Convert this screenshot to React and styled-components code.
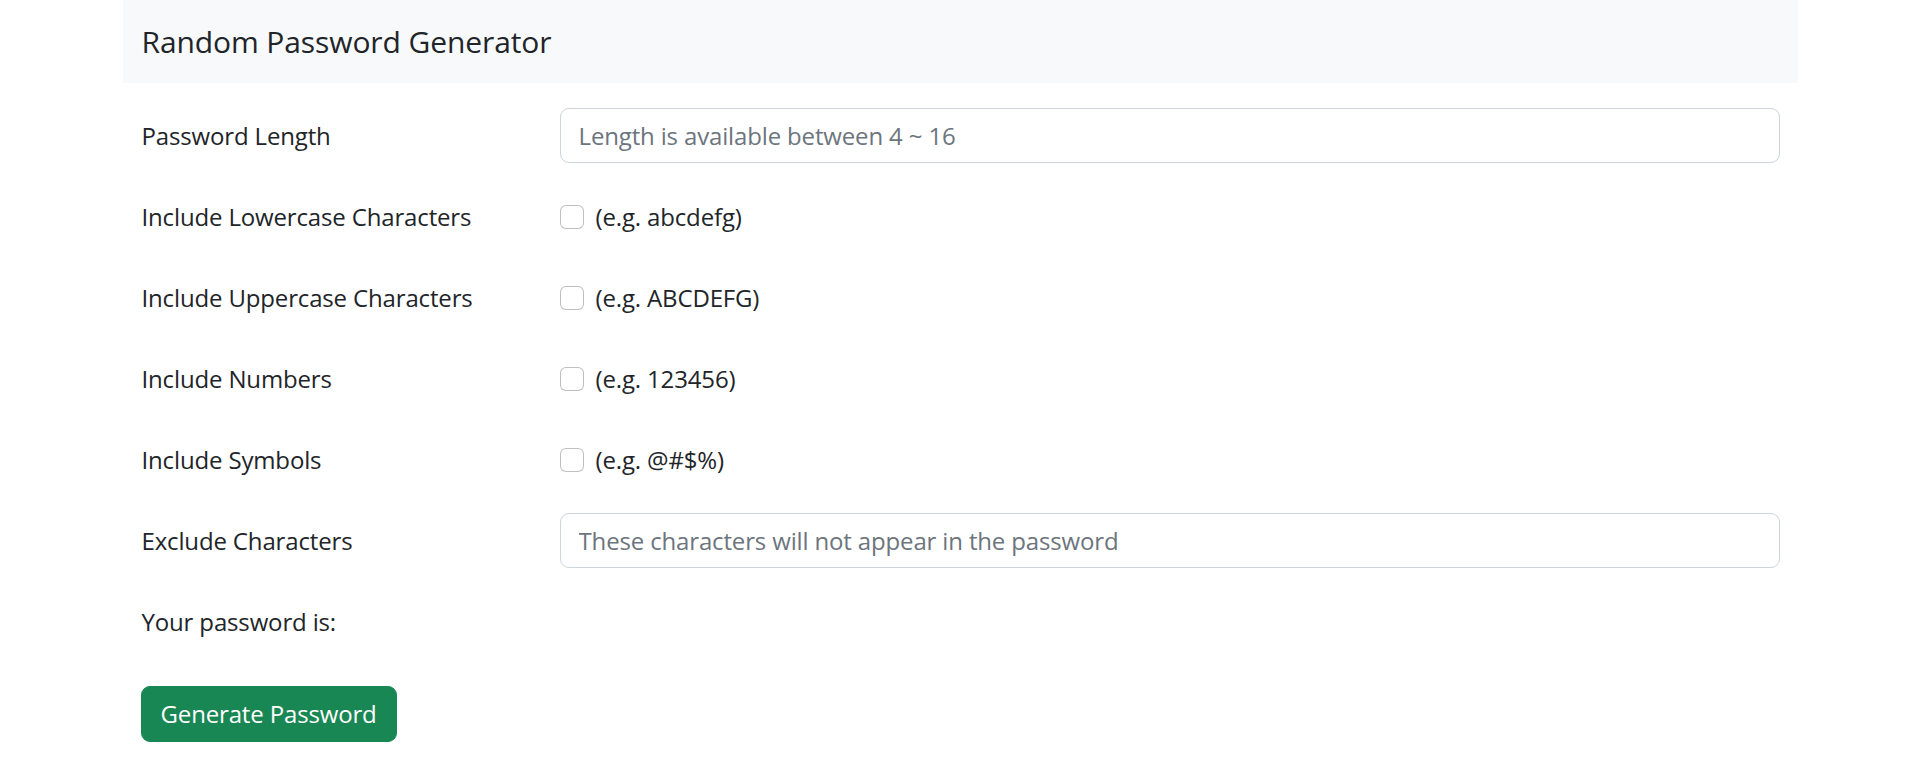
import React from "react";
import styled, { createGlobalStyle } from "styled-components";

const GlobalStyle = createGlobalStyle`
  * {
    box-sizing: border-box;
  }
  body {
    margin: 0;
    background: #ffffff;
    color: #212529;
    font-family: "Open Sans", "Noto Sans", sans-serif;
    font-size: 24px;
    letter-spacing: -0.15px;
  }
`;

const options = [
  { label: "Include Lowercase Characters", example: "(e.g. abcdefg)" },
  { label: "Include Uppercase Characters", example: "(e.g. ABCDEFG)" },
  { label: "Include Numbers", example: "(e.g. 123456)" },
  { label: "Include Symbols", example: "(e.g. @#$%)" },
];

function App() {
  return (
    <>
      <GlobalStyle />
      <Container>
        <Header>
          <Title>Random Password Generator</Title>
        </Header>
        <Form>
          <Row>
            <Label>Password Length</Label>
            <Field>
              <Input type="text" placeholder="Length is available between 4 ~ 16" />
            </Field>
          </Row>
          {options.map((opt) => (
            <Row key={opt.label}>
              <Label>{opt.label}</Label>
              <Field>
                <CheckWrap>
                  <Check type="checkbox" />
                  <CheckText>{opt.example}</CheckText>
                </CheckWrap>
              </Field>
            </Row>
          ))}
          <Row>
            <Label>Exclude Characters</Label>
            <Field>
              <Input type="text" placeholder="These characters will not appear in the password" />
            </Field>
          </Row>
          <Row>
            <Label>Your password is:</Label>
          </Row>
          <ButtonRow>
            <GenerateButton type="button">Generate Password</GenerateButton>
          </ButtonRow>
        </Form>
      </Container>
    </>
  );
}

export default App;

const Container = styled.div`
  width: 1675px;
  margin: 0 auto;
`;

const Header = styled.div`
  background-color: #f8f9fa;
  height: 83px;
  display: flex;
  align-items: center;
  padding: 0 19px;
`;

const Title = styled.h5`
  margin: 0;
  font-size: 30px;
  font-weight: 400;
  line-height: 36px;
  color: #212529;
  letter-spacing: -0.1px;
`;

const Form = styled.div`
  padding: 24px 18px 0 18px;
  display: flex;
  flex-direction: column;
  gap: 24px;
`;

const Row = styled.div`
  display: grid;
  grid-template-columns: 419px 1fr;
  align-items: center;
  min-height: 57px;
`;

const Label = styled.label`
  font-size: 24px;
  line-height: 36px;
  padding: 10px 0 10px 1px;
`;

const Field = styled.div`
  display: flex;
  align-items: center;
`;

const Input = styled.input`
  width: 100%;
  height: 55px;
  padding: 0 18px;
  font-family: inherit;
  font-size: 24px;
  letter-spacing: inherit;
  color: #212529;
  background: #ffffff;
  border: 1px solid #ced4da;
  border-radius: 9px;
  outline: none;

  &::placeholder {
    color: #6c757d;
    opacity: 1;
  }
`;

const CheckWrap = styled.div`
  display: flex;
  align-items: center;
  gap: 12px;
`;

const Check = styled.input`
  appearance: none;
  margin: 0;
  width: 24px;
  height: 24px;
  border: 1px solid rgba(0, 0, 0, 0.25);
  border-radius: 6px;
  background: #ffffff;
`;

const CheckText = styled.span`
  font-size: 24px;
  line-height: 36px;
`;

const ButtonRow = styled.div`
  margin-top: 12px;
`;

const GenerateButton = styled.button`
  height: 56px;
  padding: 0 19px;
  font-family: inherit;
  font-size: 24px;
  line-height: 36px;
  letter-spacing: inherit;
  color: #ffffff;
  background-color: #198754;
  border: 1px solid #198754;
  border-radius: 9px;
  cursor: pointer;
`;
